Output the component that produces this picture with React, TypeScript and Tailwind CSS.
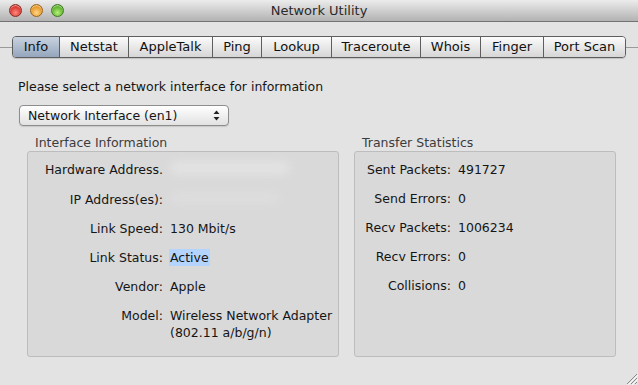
import React from "react";

const tabs: { label: string; w: number }[] = [
  { label: "Info", w: 47 },
  { label: "Netstat", w: 69 },
  { label: "AppleTalk", w: 84 },
  { label: "Ping", w: 49 },
  { label: "Lookup", w: 70 },
  { label: "Traceroute", w: 89 },
  { label: "Whois", w: 60 },
  { label: "Finger", w: 63 },
  { label: "Port Scan", w: 82 },
];

function Light({ from, to, rim }: { from: string; to: string; rim: string }) {
  return (
    <div
      className="w-[13px] h-[13px] rounded-full border"
      style={{
        borderColor: rim,
        background: `radial-gradient(circle at 50% 70%, ${from} 0%, ${to} 75%)`,
        boxShadow: "inset 0 1px 1px rgba(255,255,255,0.6)",
      }}
    />
  );
}

function Row({ label, children, lw }: { label: string; children: React.ReactNode; lw: string }) {
  return (
    <div className="flex leading-[17px]">
      <div className={`${lw} text-right shrink-0`}>{label}</div>
      <div className="pl-[7px]">{children}</div>
    </div>
  );
}

export default function App() {
  return (
    <div className="w-[638px] h-[385px] bg-[#e3e3e3] flex flex-col overflow-hidden relative font-['DejaVu_Sans',sans-serif] text-[12.5px] text-[#151515]">
      {/* Title bar */}
      <div className="h-[22px] shrink-0 bg-gradient-to-b from-[#ececec] to-[#b3b3b3] border-b border-[#727272] grid grid-cols-[1fr_auto_1fr] items-center">
        <div className="flex items-center gap-[8px] pl-[9px]">
          <Light from="#ff8a80" to="#d0231c" rim="#8a2a22" />
          <Light from="#ffd68a" to="#e08a12" rim="#9a6418" />
          <Light from="#b8f07a" to="#4aa41c" rim="#3c7a1e" />
        </div>
        <div className="text-[13px] text-[#2a2a2a] leading-[16px]">Network Utility</div>
        <div />
      </div>

      {/* Tabs */}
      <div className="mt-[14px] flex items-center h-[22px]">
        <div className="w-[12px] h-px bg-[#9a9a9a]" />
        <div className="flex h-[22px] border border-[#5e5e5e] rounded-[4px] overflow-hidden shadow-[0_1px_1px_rgba(0,0,0,0.15)]">
          {tabs.map((t, i) => (
            <div
              key={t.label}
              style={{ width: t.w - (i === 0 ? 1 : 0) }}
              className={`flex items-center justify-center leading-[16px] text-[13px] ${i > 0 ? "border-l border-[#5e5e5e]" : ""} ${
                i === 0
                  ? "bg-gradient-to-b from-[#c9d3e0] to-[#95a6bc] text-[#111]"
                  : "bg-gradient-to-b from-[#fbfbfb] to-[#d6d6d6] text-[#111]"
              }`}
            >
              {t.label}
            </div>
          ))}
        </div>
        <div className="flex-1 h-px bg-[#9a9a9a]" />
      </div>

      {/* Prompt */}
      <div className="mt-[21px] pl-[18px] leading-[16px]">Please select a network interface for information</div>

      {/* Dropdown */}
      <div className="mt-[10px] ml-[19px] w-[210px] h-[21px] border border-[#8d8d8d] rounded-[4px] bg-gradient-to-b from-[#ffffff] to-[#e2e2e2] shadow-[0_1px_1px_rgba(0,0,0,0.12)] flex items-center justify-between pl-[8px] pr-[8px]">
        <span className="leading-[16px]">Network Interface (en1)</span>
        <svg width="7" height="11" viewBox="0 0 7 11">
          <path d="M3.5 0.5 L6.5 4 L0.5 4 Z" fill="#222" />
          <path d="M3.5 10.5 L6.5 7 L0.5 7 Z" fill="#222" />
        </svg>
      </div>

      {/* Boxes */}
      <div className="mt-[9px] flex">
        <div className="ml-[27px] w-[312px] flex flex-col">
          <div className="pl-[8px] leading-[16px] text-[#3c3c3c]">Interface Information</div>
          <div className="h-[206px] bg-[#d9d9d9] border border-[#bdbdbd] rounded-[3px] pt-[9px] flex flex-col gap-[12px]">
            <Row label="Hardware Address." lw="w-[135px]">
              <span className="inline-block w-[120px] h-[14px] rounded-full bg-[#e6e6e6] blur-[4px] opacity-70" />
            </Row>
            <Row label="IP Address(es):" lw="w-[135px]">
              <span className="inline-block w-[110px] h-[12px] rounded-full bg-[#e0e0e0] blur-[4px] opacity-60" />
            </Row>
            <Row label="Link Speed:" lw="w-[135px]">130 Mbit/s</Row>
            <Row label="Link Status:" lw="w-[135px]">
              <span className="bg-[#b4d4fd] py-[1px] pr-[1px] -ml-[1px] pl-[1px]">Active</span>
            </Row>
            <Row label="Vendor:" lw="w-[135px]">Apple</Row>
            <Row label="Model:" lw="w-[135px]">
              <div>Wireless Network Adapter</div>
              <div>(802.11 a/b/g/n)</div>
            </Row>
          </div>
        </div>

        <div className="ml-[15px] w-[262px] flex flex-col">
          <div className="pl-[8px] leading-[16px] text-[#3c3c3c]">Transfer Statistics</div>
          <div className="h-[206px] bg-[#d9d9d9] border border-[#bdbdbd] rounded-[3px] pt-[9px] flex flex-col gap-[12px]">
            <Row label="Sent Packets:" lw="w-[96px]">491727</Row>
            <Row label="Send Errors:" lw="w-[96px]">0</Row>
            <Row label="Recv Packets:" lw="w-[96px]">1006234</Row>
            <Row label="Recv Errors:" lw="w-[96px]">0</Row>
            <Row label="Collisions:" lw="w-[96px]">0</Row>
          </div>
        </div>
      </div>

      {/* Resize grip */}
      <svg className="absolute right-0 bottom-0" width="15" height="15" viewBox="0 0 15 15">
        <path d="M14 4 L4 14 M14 8 L8 14 M14 12 L12 14" stroke="#8a8a8a" strokeWidth="1" />
        <path d="M15 5 L5 15 M15 9 L9 15" stroke="#fafafa" strokeWidth="1" />
      </svg>
    </div>
  );
}
